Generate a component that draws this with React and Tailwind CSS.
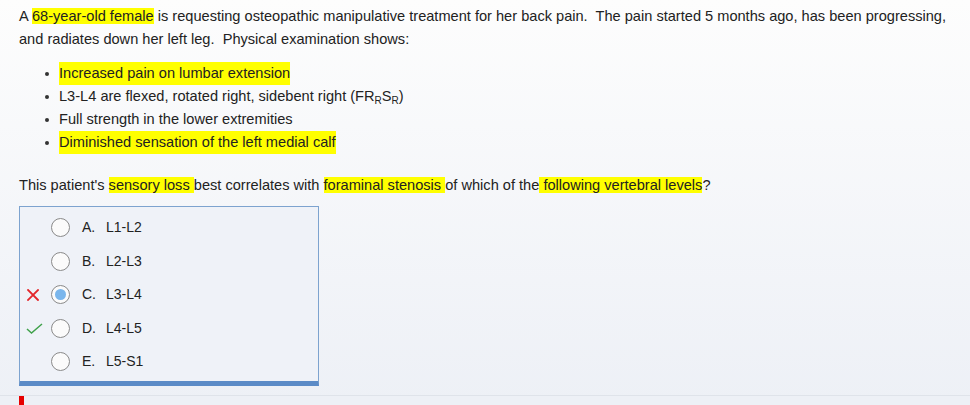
import React from 'react';

const Hl = ({ children }) => <span className="bg-[#ffff00]">{children}</span>;

const options = [
    { letter: 'A.', text: 'L1-L2' },
    { letter: 'B.', text: 'L2-L3' },
    { letter: 'C.', text: 'L3-L4', selected: true, wrong: true },
    { letter: 'D.', text: 'L4-L5', correct: true },
    { letter: 'E.', text: 'L5-S1' },
];

const findings = [
    { text: 'Increased pain on lumbar extension', hl: true },
    {
        text: (
            <>
                L3-L4 are flexed, rotated right, sidebent right (FR<sub className="text-[10px]">R</sub>S<sub className="text-[10px]">R</sub>)
            </>
        ),
    },
    { text: 'Full strength in the lower extremities' },
    { text: 'Diminished sensation of the left medial calf', hl: true },
];

const WrongMark = () => (
    <svg width="12" height="12" viewBox="0 0 12 12" className="ml-[7px]">
        <path d="M1 1 L11 11 M11 1 L1 11" stroke="#e3262b" strokeWidth="1.8" strokeLinecap="square" />
    </svg>
);

const RightMark = () => (
    <svg width="17" height="11" viewBox="0 0 17 11" className="ml-[6px]">
        <path d="M1 6 L5.5 10 L16 1" stroke="#3fa14a" strokeWidth="1.5" fill="none" />
    </svg>
);

const Radio = ({ selected }) => (
    <div className="w-[19px] h-[19px] rounded-full border border-[#8a8a8a] bg-[#fbfbfb] flex items-center justify-center shrink-0">
        {selected && <div className="w-[11px] h-[11px] rounded-full bg-[#7ab6ec]" />}
    </div>
);

export default function App() {
    return (
        <div className="w-[970px] h-[405px] overflow-hidden bg-gradient-to-b from-[#fdfdfd] to-[#edf0f6] font-['Liberation_Sans',Arial,sans-serif] text-[14.6px] leading-[23px] text-[#222]">
            <div className="pl-[19px] pt-[5px]">
                <p>
                    A <Hl>68-year-old female</Hl> is requesting osteopathic manipulative treatment for her back pain.{'\u00a0'} The pain started 5 months ago, has been progressing, and radiates down her left leg.{'\u00a0'} Physical examination shows:
                </p>

                <ul className="mt-[11px] ml-[26px]">
                    {findings.map((f, i) => (
                        <li key={i} className="flex items-center">
                            <span className="w-[4px] h-[4px] rounded-full bg-[#333] mr-[10px] shrink-0" />
                            {f.hl ? <Hl>{f.text}</Hl> : <span>{f.text}</span>}
                        </li>
                    ))}
                </ul>

                <p className="mt-[20px]">
                    This patient's <Hl>sensory loss </Hl>best correlates with <Hl>foraminal stenosis </Hl>of which of the<Hl> following vertebral levels</Hl>?
                </p>

                <div className="mt-[9px] w-[300px] border border-[#7da3cf] border-b-[5px] border-b-[#5b8bc7] bg-[#eff2f8] pt-[4px] pb-[2px] text-[14px]">
                    {options.map((o) => (
                        <div key={o.letter} className="h-[33.5px] flex items-center">
                            <div className="w-[31px] flex items-center">
                                {o.wrong && <WrongMark />}
                                {o.correct && <RightMark />}
                            </div>
                            <Radio selected={o.selected} />
                            <span className="ml-[12px] w-[24px]">{o.letter}</span>
                            <span>{o.text}</span>
                        </div>
                    ))}
                </div>
            </div>

            <div className="mt-[9px] border-t border-[#dfe3ea] bg-[#edf0f6]">
                <div className="ml-[19px] w-[5px] h-[12px] bg-[#e60000]" />
            </div>
        </div>
    );
}
